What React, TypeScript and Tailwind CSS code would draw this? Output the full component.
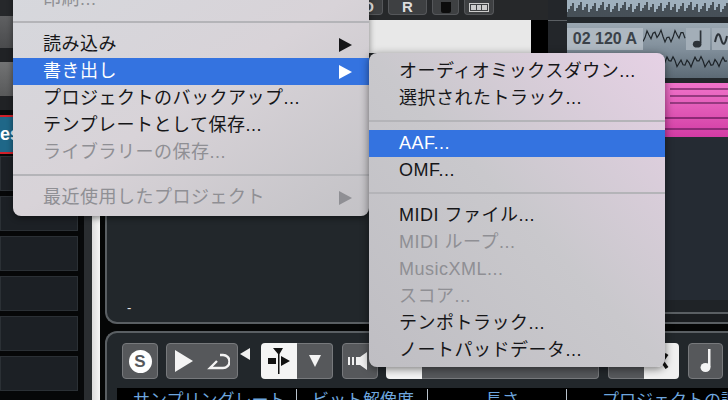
import type { ReactNode } from "react";

const wave = (w: number, h: number, seed: number, step = 2) => {
  const top: string[] = [];
  for (let x = 0; x <= w; x += step) {
    const n = Math.sin(x * 0.9 + seed) * 0.5 + Math.sin(x * 0.23 + seed * 2) * 0.3 + Math.sin(x * 2.7) * 0.2;
    top.push(`${x},${(h / 2 + (n * h) / 2).toFixed(1)}`);
  }
  return top.join(" ");
};

const bars = (w: number, h: number) => {
  let d = "";
  for (let x = 0; x < w; x += 2) {
    const a = 5 + ((x * 7) % 11);
    d += `M${x} ${h}V${h - a}`;
  }
  return d;
};

type Item = { label: string; disabled?: boolean; active?: boolean; arrow?: boolean } | "sep";

const fileMenu: Item[] = [
  { label: "印刷...", disabled: true },
  "sep",
  { label: "読み込み", arrow: true },
  { label: "書き出し", arrow: true, active: true },
  { label: "プロジェクトのバックアップ..." },
  { label: "テンプレートとして保存..." },
  { label: "ライブラリーの保存...", disabled: true },
  "sep",
  { label: "最近使用したプロジェクト", disabled: true, arrow: true },
];

const exportMenu: Item[] = [
  { label: "オーディオミックスダウン..." },
  { label: "選択されたトラック..." },
  "sep",
  { label: "AAF...", active: true },
  { label: "OMF..." },
  "sep",
  { label: "MIDI ファイル..." },
  { label: "MIDI ループ...", disabled: true },
  { label: "MusicXML...", disabled: true },
  { label: "スコア...", disabled: true },
  { label: "テンポトラック..." },
  { label: "ノートパッドデータ..." },
];

function MenuRows({ items }: { items: Item[] }) {
  return (
    <>
      {items.map((item, i) =>
        item === "sep" ? (
          <div key={i} className="flex h-[18px] items-center">
            <div className="h-[2px] w-full bg-[#b4b4b8]" />
          </div>
        ) : (
          <div
            key={i}
            className={`flex h-[27px] items-center justify-between pl-[30px] pr-[17px] text-[18px] leading-[27px] tracking-[0.5px] ${
              item.active ? "bg-[#3473e0] text-white" : item.disabled ? "text-[#8f8f94]" : "text-[#161618]"
            }`}
          >
            <span>{item.label}</span>
            {item.arrow && (
              <svg width="13" height="14" viewBox="0 0 13 14">
                <path d="M0 0L13 7L0 14Z" fill={item.active ? "#fff" : item.disabled ? "#8f8f94" : "#161618"} />
              </svg>
            )}
          </div>
        )
      )}
    </>
  );
}

function LeftColumn() {
  return (
    <div className="flex w-[80px] shrink-0 flex-col overflow-hidden bg-[#060708]">
      <div className="h-[16px] shrink-0 bg-[#26282b]" />
      <div className="h-[32px] shrink-0 bg-gradient-to-b from-[#5f6062] to-[#4a4b4d]" />
      <div className="h-[14px] shrink-0 bg-[#202225]" />
      <div className="h-[34px] shrink-0 bg-gradient-to-b from-[#727374] to-[#58595a]" />
      <div className="h-[14px] shrink-0 bg-[#202225]" />
      <div className="h-[5px] shrink-0 bg-[#0a0b0c]" />
      <div className="flex h-[39px] shrink-0 items-center overflow-hidden border-y-2 border-[#d0202a] bg-[#1f6788] text-[18px] font-bold text-white">
        <span className="-ml-[13px]">Des</span>
      </div>
      <div className="mt-[2px] flex shrink-0 flex-col gap-[5px]">
        {[0, 1, 2, 3, 4, 5].map((r) => (
          <div key={r} className="h-[35px] w-[78px] shrink-0 border border-[#2b3035] bg-[#1c2025]" />
        ))}
      </div>
    </div>
  );
}

function Timeline() {
  return (
    <div className="flex w-[180px] shrink-0">
      <div className="w-[19px] shrink-0 bg-[#23262a]">
        <div className="mt-[20px] h-px bg-[#5c6064]" />
      </div>
      <div className="flex min-w-0 flex-1 flex-col bg-[#252b33]">
        <div className="h-[17px] shrink-0 bg-[#9fb0bd]">
          <svg width="161" height="17" viewBox="0 0 161 17">
            <path d={bars(161, 17)} stroke="#22282d" strokeWidth="1.4" />
          </svg>
        </div>
        <div className="h-[6px] shrink-0 bg-[#23282c]" />
        <div className="h-[55px] shrink-0 bg-gradient-to-b from-[#9aa7b1] via-[#7f8d99] to-[#5c6a75]">
          <div className="flex h-[27px] items-center pt-[5px]">
            <div className="flex h-[22px] w-[76px] shrink-0 items-center justify-center bg-[#aeb8c1] text-[16px] font-bold text-[#3b4249]">
              02 120 A
            </div>
            <svg width="43" height="22" viewBox="0 0 43 22" className="shrink-0">
              <polyline points={wave(43, 16, 1)} fill="none" stroke="#20262b" strokeWidth="1.2" />
            </svg>
            <div className="flex h-[22px] w-[24px] shrink-0 items-center justify-center bg-[#a3aeb8]">
              <svg width="12" height="20" viewBox="0 0 14 22">
                <path d="M10 1V16" stroke="#2c3238" strokeWidth="2" />
                <ellipse cx="6" cy="17" rx="5" ry="4" fill="#2c3238" />
              </svg>
            </div>
            <div className="ml-[2px] flex h-[22px] flex-1 items-center bg-[#a3aeb8] pl-[2px]">
              <svg width="14" height="18" viewBox="0 0 14 18">
                <path d="M1 12Q4 -2 7 9T13 6" fill="none" stroke="#2c3238" strokeWidth="2" />
              </svg>
            </div>
          </div>
          <svg width="161" height="22" viewBox="0 0 161 22" className="mt-[5px]">
            <polyline points={wave(161, 14, 3)} fill="none" stroke="#1c2227" strokeWidth="1.2" />
          </svg>
        </div>
        <div className="h-[5px] shrink-0 bg-[#23282c]" />
        <div className="flex h-[54px] shrink-0 flex-col bg-gradient-to-b from-[#f073ca] to-[#d23ba4] pt-[5px]">
          <div className="ml-[103px] h-[2px] bg-[#963a80]" />
          <div className="ml-[103px] mt-[5px] h-[2px] bg-[#963a80]" />
          <div className="ml-[103px] mt-[5px] h-[2px] bg-[#963a80]" />
          <div className="mt-[13px] h-[2px] bg-[#8c2a75]" />
          <div className="mt-[9px] h-[2px] bg-[#8c2a75]" />
        </div>
        <div className="flex-1" />
        <div className="h-[12px] shrink-0 bg-[#1f2327]" />
        <div className="h-[2px] shrink-0 bg-[#5a5f63]" />
        <div className="h-[8px] shrink-0 bg-[#1a1d20]" />
      </div>
    </div>
  );
}

function ToolBtn({ className = "", children }: { className?: string; children?: ReactNode }) {
  return (
    <div className={`flex h-[36px] shrink-0 items-center justify-center rounded-[4px] border border-[#77797c] bg-[#56585b] ${className}`}>
      {children}
    </div>
  );
}

function Toolbar() {
  const cap = "flex h-[15px] shrink-0 items-center justify-center rounded-b-[4px] border border-t-0 border-[#55575a] bg-[#3e4042]";
  return (
    <div className="flex h-[20px] shrink-0 items-start justify-end gap-[5px] bg-[#26282a] pr-[54px]">
      <div className={`${cap} w-[30px] text-[15px] font-bold text-[#ddd]`}>O</div>
      <div className={`${cap} w-[39px] text-[15px] font-bold text-[#ddd]`}>R</div>
      <div className={`${cap} w-[27px]`}>
        <div className="h-[11px] w-[10px] rounded-b-[2px] bg-[#0c0c0c]" />
      </div>
      <div className={`${cap} w-[30px]`}>
        <div className="flex h-[9px] w-[20px] gap-px border border-[#ccc] p-px">
          <div className="flex-1 bg-[#ccc]" />
          <div className="flex-1 bg-[#ccc]" />
          <div className="flex-1 bg-[#ccc]" />
        </div>
      </div>
    </div>
  );
}

function Transport() {
  return (
    <div className="flex min-h-0 flex-1 flex-col overflow-hidden rounded-tl-xl border-l-2 border-t-2 border-[#5a5f63] bg-[#22272b]">
      <div className="flex shrink-0 pl-[15px] pt-[10px]">
        <ToolBtn className="w-[36px]">
          <div className="flex h-[23px] w-[23px] items-center justify-center rounded-full bg-white text-[17px] font-bold leading-none text-[#56585b]">
            S
          </div>
        </ToolBtn>
        <ToolBtn className="ml-[8px] w-[72px] gap-[14px]">
          <svg width="18" height="22" viewBox="0 0 18 22">
            <path d="M0 0L18 11L0 22Z" fill="#f4f4f4" />
          </svg>
          <svg width="23" height="17" viewBox="0 0 23 17">
            <path d="M13 2H16A6 6 0 0 1 16 15H3L10 8" fill="none" stroke="#f4f4f4" strokeWidth="2.4" />
          </svg>
        </ToolBtn>
        <svg width="10" height="12" viewBox="0 0 10 12" className="ml-[2px] mt-[5px] shrink-0">
          <path d="M10 0V12L0 6Z" fill="#f0f0f0" />
        </svg>
        <div className="ml-[11px] flex shrink-0">
          <div className="flex h-[36px] w-[36px] items-center justify-center rounded-l-[4px] bg-[#f4f4f4]">
            <svg width="24" height="26" viewBox="0 0 24 26">
              <path d="M6 0H16L12.5 6V26H11V6Z" fill="#111" />
              <path d="M1 10H9V16H1ZM14 8L23 13L14 18Z" fill="#111" />
            </svg>
          </div>
          <ToolBtn className="w-[36px] rounded-l-none border-l-0">
            <svg width="12" height="12" viewBox="0 0 12 12">
              <path d="M0 0H12L6 12Z" fill="#f4f4f4" />
            </svg>
          </ToolBtn>
        </div>
        <ToolBtn className="ml-[9px] w-[36px] justify-start pl-[5px]">
          <svg width="26" height="20" viewBox="0 0 26 20">
            <path d="M0 6H2V14H0ZM4 6H6V14H4ZM8 6H12L19 1V19L12 14H8Z" fill="#f0f0f0" />
          </svg>
        </ToolBtn>
        <div className="ml-[8px] h-[36px] w-[36px] shrink-0 rounded-l-[4px] bg-[#f4f4f4]" />
        <ToolBtn className="w-[177px] rounded-l-none border-l-0" />
        <ToolBtn className="ml-[9px] w-[36px] rounded-r-none border-r-0" />
        <div className="flex h-[36px] w-[35px] shrink-0 items-center justify-center rounded-r-[4px] bg-[#f0f0f0]">
          <svg width="14" height="16" viewBox="0 0 14 16">
            <path d="M2 1L12 15M12 1L7 8" fill="none" stroke="#111" strokeWidth="3.5" />
          </svg>
        </div>
        <ToolBtn className="ml-[9px] w-[35px]">
          <svg width="14" height="24" viewBox="0 0 14 24">
            <path d="M9 0H11.5V18H9Z" fill="#f4f4f4" />
            <ellipse cx="6.5" cy="18.5" rx="5" ry="4.5" fill="#f4f4f4" />
          </svg>
        </ToolBtn>
      </div>
      <div className="ml-[10px] mt-[9px] flex h-[24px] shrink-0 bg-black pt-[1px] text-[17px] leading-[24px] text-[#6ea6de]">
        <div className="w-[180px] shrink-0 border-r border-[#b9c2cc] pl-[16px]">サンプリングレート</div>
        <div className="w-[131px] shrink-0 border-r border-[#b9c2cc] pl-[15px]">ビット解像度</div>
        <div className="w-[139px] shrink-0 border-r border-[#b9c2cc] pl-[57px]">長さ</div>
        <div className="flex-1 whitespace-nowrap pl-[35px]">プロジェクトの調</div>
      </div>
    </div>
  );
}

export default function App() {
  return (
    <div className="relative flex h-[400px] w-[728px] overflow-hidden bg-[#050606] font-['Liberation_Sans','Noto_Sans_CJK_JP',sans-serif] [font-synthesis:none]">
      <LeftColumn />
      <div className="flex w-[12px] shrink-0">
        <div className="w-[4px] bg-[#08090a]" />
        <div className="w-[8px] bg-[#2a2d30]" />
      </div>
      <div className="w-[8px] shrink-0 bg-gradient-to-r from-[#dcdcdc] to-[#f6f6f6]" />
      <div className="w-[5px] shrink-0 bg-[#050606]" />
      <div className="flex min-w-0 flex-1 flex-col">
        <div className="flex h-[324px] shrink-0 overflow-hidden rounded-bl-xl border-b-2 border-l-2 border-[#5a5f63] bg-[#22272b]">
          <div className="flex w-[441px] shrink-0 flex-col">
            <Toolbar />
            <div className="flex h-[33px] shrink-0">
              <div className="w-[424px] bg-[#e8e8e8]" />
              <div className="flex-1 bg-black" />
            </div>
            <div className="flex flex-1 items-end pb-[8px] pl-[20px] text-[13px] leading-none text-[#e8e8e8]">-</div>
          </div>
          <Timeline />
        </div>
        <div className="h-[7px] shrink-0" />
        <Transport />
      </div>

      <div className="absolute left-[13px] top-[-18px] h-[234px] w-[356px] rounded-b-[8px] bg-gradient-to-br from-[#d6d8dd] via-[#d8d3d8] to-[#c3c2c6] pt-[4px] shadow-[0_2px_6px_rgba(0,0,0,0.45)]">
        <MenuRows items={fileMenu} />
      </div>
      <div className="absolute left-[369px] top-[53px] h-[314px] w-[296px] rounded-[8px] bg-gradient-to-bl from-[#e6d1e5] via-[#c9c8cc] to-[#bfbec3] pt-[5px] shadow-[0_2px_8px_rgba(0,0,0,0.5)]">
        <MenuRows items={exportMenu} />
      </div>
    </div>
  );
}
